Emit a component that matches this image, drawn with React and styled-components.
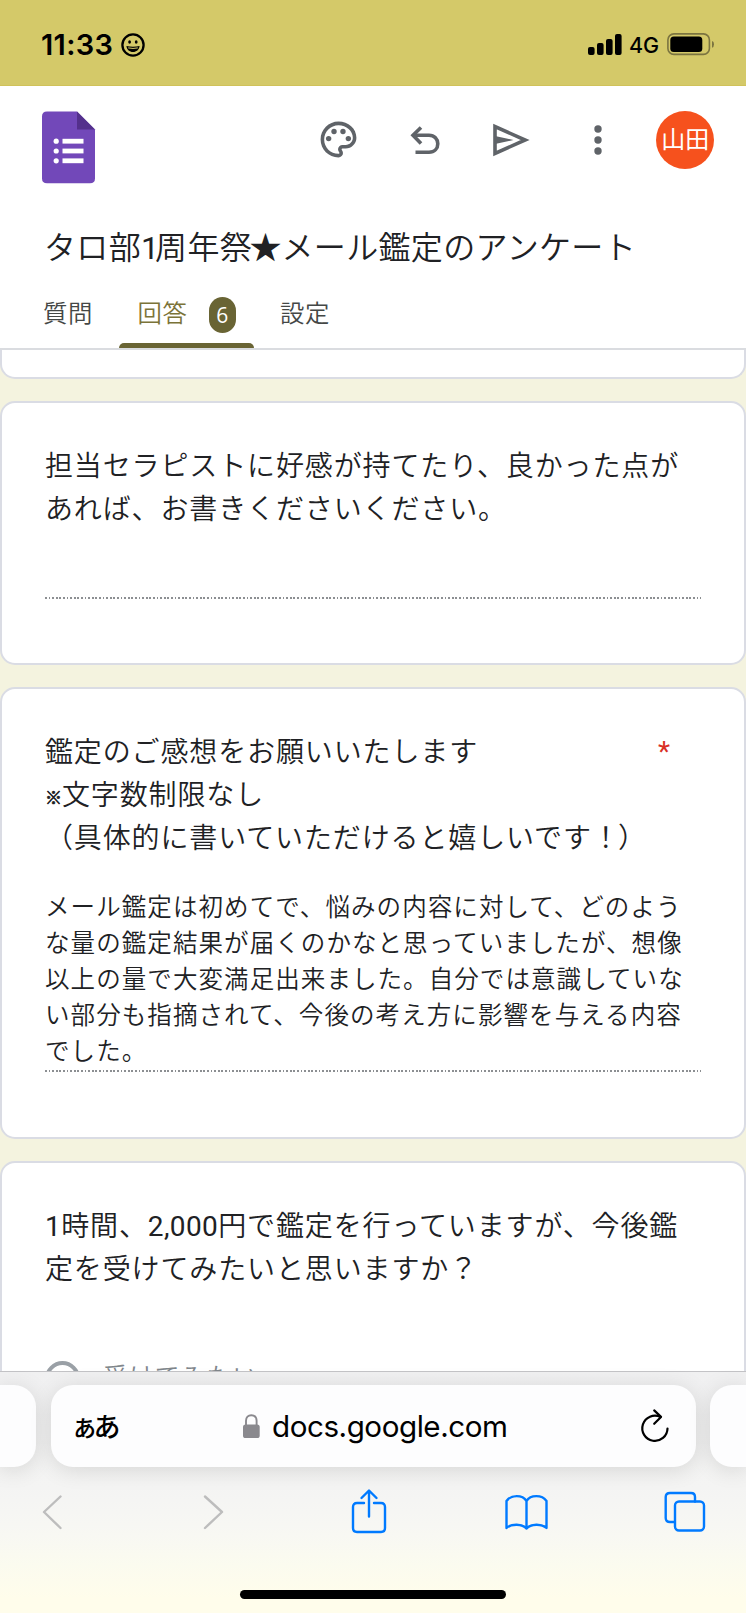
import React from "react";
import styled, { createGlobalStyle } from "styled-components";
import { MdOutlinePalette } from "react-icons/md";

const GlobalStyle = createGlobalStyle`
  * { box-sizing: border-box; }
  body {
    margin: 0;
    background: #f4f3df;
    font-family: Roboto, "Noto Sans CJK JP", sans-serif;
    color: #202124;
  }
  svg { display: block; overflow: visible; }
`;

const Screen = styled.div`
  width: 746px;
  height: 1613px;
  display: flex;
  flex-direction: column;
  overflow: hidden;
`;

const StatusBar = styled.div`
  height: 86px;
  flex: none;
  background: #d4c969;
  border-bottom: 1px solid #d0c25a;
  padding: 4px 31px 0 41px;
  display: flex;
  align-items: center;
  color: #000;
  font-family: Inter, sans-serif;
`;

const Clock = styled.div`
  font-size: 29px;
  font-weight: 600;
  letter-spacing: 0.35px;
  width: 79.5px;
  white-space: nowrap;
`;

const StatusRight = styled.div`
  margin-left: auto;
  display: flex;
  align-items: center;
`;

const Network = styled.span`
  width: 38px;
  font-size: 21.5px;
  font-weight: 500;
  line-height: 26px;
  padding: 1px 0 0 0;
`;

const Header = styled.header`
  height: 264px;
  flex: none;
  background: #fff;
  border-bottom: 2px solid #dadce0;
  display: flex;
  flex-direction: column;
`;

const Toolbar = styled.div`
  height: 97px;
  padding: 24.5px 17.5px 0 42px;
  display: flex;
  justify-content: space-between;
  align-items: flex-start;
`;

const Actions = styled.div`
  display: grid;
  grid-template-columns: repeat(5, 86.5px);
  height: 59px;
  align-items: center;
  justify-items: center;
  color: #5f6368;

  > svg { margin: 0 2px 1px 0; }
`;

const Avatar = styled.div`
  width: 58px;
  height: 58px;
  border-radius: 50%;
  background: #f6511d;
  color: #fff;
  font-size: 24px;
  line-height: 59px;
  text-align: center;
`;

const Title = styled.h1`
  margin: 38.5px 0 0 44px;
  height: 52px;
  line-height: 52px;
  font-size: 32px;
  font-weight: 350;
  letter-spacing: 0.35px;
  white-space: nowrap;
`;

const TitleDigit = styled.span`
  font-weight: 400;
  letter-spacing: -4px;
`;

const Star = styled.span`
  margin: 0 -0.5px 0 -2.5px;
`;

const Tabs = styled.nav`
  margin-top: auto;
  height: 60px;
  padding-left: 18px;
  display: flex;
`;

const Tab = styled.div`
  width: ${(p) => p.$width}px;
  padding: 9px 0 0 ${(p) => p.$inset}px;
  display: flex;
  justify-content: flex-start;
  align-items: flex-start;
  font-size: 24.4px;
  font-weight: 350;
  letter-spacing: 0.7px;
  line-height: 34px;
  color: ${(p) => (p.$active ? "#7b7338" : "#444746")};
  position: relative;

  &::after {
    content: "";
    display: ${(p) => (p.$active ? "block" : "none")};
    position: absolute;
    left: 0;
    right: 0;
    bottom: 0;
    height: 5px;
    border-radius: 5px 5px 0 0;
    background: #696434;
  }
`;

const Badge = styled.span`
  margin-left: 21px;
  width: 27px;
  height: 36px;
  border-radius: 13.5px;
  background: #696434;
  color: #fff;
  font-family: "Open Sans", sans-serif;
  font-size: 21px;
  font-weight: 500;
  letter-spacing: 0;
  line-height: 36px;
  text-align: center;
`;

const Content = styled.main`
  height: 1021px;
  flex: none;
  overflow: hidden;
  display: flex;
  flex-direction: column;
  gap: 22px;
`;

const Card = styled.section`
  height: ${(p) => p.$height}px;
  flex: none;
  background: #fff;
  border: 2px solid #dadce4;
  border-radius: 15px;
  padding: ${(p) => p.$top || 42}px 43px 0;
`;

const CardEnd = styled(Card)`
  border-top: 0;
  border-radius: 0 0 15px 15px;
  padding: 0;
`;

const QuestionRow = styled.div`
  display: flex;
  justify-content: space-between;
  padding-right: 31px;
`;

const Question = styled.div`
  font-size: 28px;
  font-weight: 350;
  letter-spacing: 0.87px;
  line-height: 43.2px;
  white-space: nowrap;
`;

const Digits = styled.span`
  font-weight: 400;
  letter-spacing: 0.4px;
`;

const Tight = styled.span`
  letter-spacing: -2px;
`;

const Note = styled.span`
  font-size: 17px;
  font-weight: 700;
  letter-spacing: 0;
  line-height: 20px;
  vertical-align: 1.5px;
  -webkit-text-stroke: 0.7px currentColor;
`;

const Required = styled.span`
  color: #d93025;
  font-size: 28px;
  line-height: 41px;
`;

const Answer = styled.div`
  height: ${(p) => p.$height}px;
  margin-top: ${(p) => p.$gap}px;
  font-size: 24.5px;
  font-weight: 350;
  letter-spacing: 1.08px;
  line-height: 36px;
  white-space: nowrap;
`;

const DottedRule = styled.div`
  height: 2px;
  background: repeating-linear-gradient(
    to right,
    #8c8f92 0 1.8px,
    #fff 1.8px 3.6px
  );
`;

const Option = styled.div`
  display: flex;
  align-items: center;
  gap: 23px;
  margin-top: 69.5px;
  color: #80868b;
  font-size: 24.8px;
  font-weight: 350;
  letter-spacing: 1.1px;
  line-height: 34px;
`;

const Radio = styled.span`
  width: 35px;
  height: 35px;
  border: 4px solid #9aa0a6;
  border-radius: 50%;
`;

const Browser = styled.footer`
  flex: 1;
  border-top: 1px solid #c3c3c6;
  background: linear-gradient(#f0f0f1 0, #f4f4f3 48%, #f8f8f3 68%, #fbfbef 80%, #fffdeb 94%);
  display: flex;
  flex-direction: column;
`;

const AddressRow = styled.div`
  display: flex;
  gap: 14.5px;
  padding-top: 13px;
`;

const Pill = styled.div`
  height: 82px;
  width: ${(p) => (p.$main ? "645px" : "36px")};
  flex: none;
  border-radius: ${(p) => p.$radius};
  background: #fdfdfe;
  box-shadow: 0 3px 22px rgba(0, 0, 0, 0.12);
  display: flex;
  align-items: center;
  padding: ${(p) => (p.$main ? "0 26.5px 0 20.5px" : "0")};
  color: #000;
`;

const TextSize = styled.span`
  font-size: 27px;
  font-weight: 500;
  letter-spacing: -4.5px;
  line-height: 40px;
  width: 171.5px;
  padding-top: 3px;
`;

const Host = styled.span`
  font-family: Inter, sans-serif;
  font-size: 29.6px;
  letter-spacing: -0.45px;
  line-height: 40px;
  margin-left: 12.5px;
  margin-right: auto;
`;

const NavRow = styled.div`
  display: flex;
  justify-content: space-between;
  padding: 20px 38.5px 0 29.5px;
`;

const HomeBar = styled.div`
  width: 266px;
  height: 9px;
  border-radius: 5px;
  background: #000;
  margin: auto auto 14px 240px;
`;

const Smile = () => (
  <svg width="24" height="24" viewBox="0 0 24 24">
    <circle cx="12" cy="12" r="10.6" fill="none" stroke="#000" strokeWidth="2.3" />
    <ellipse cx="8.6" cy="9" rx="1.4" ry="1.8" />
    <ellipse cx="15.2" cy="9" rx="1.4" ry="1.8" />
    <path d="M5.4 13Q12 14.6 18.6 13C18.2 16.7 15.4 19 12 19S5.8 16.7 5.4 13z" />
    <path d="M7.2 14.9Q12 16 16.8 14.9" fill="none" stroke="#d4c969" strokeWidth="1" />
  </svg>
);

const Signal = () => (
  <svg width="41.5" height="22" viewBox="0 0 41.5 22">
    <rect x="0" y="13" width="6.6" height="8" rx="2" />
    <rect x="9" y="9" width="6.6" height="12" rx="2" />
    <rect x="18" y="5" width="6.6" height="16" rx="2" />
    <rect x="27" y="0" width="6.6" height="21" rx="2" />
  </svg>
);

const Battery = () => (
  <svg width="48" height="23" viewBox="0 0 48 23">
    <rect x="0.9" y="0.9" width="41.5" height="20.5" rx="6" fill="none" stroke="#7b7440" strokeWidth="1.6" />
    <rect x="3.3" y="3.5" width="32" height="15.5" rx="3.5" />
    <path d="M45 8Q47 8.5 47 11.3T45 14.8z" fill="#7b7440" />
  </svg>
);

const FormsLogo = () => (
  <svg width="53" height="73" viewBox="0 0 53 73">
    <path d="M5 0.5H35L53 18.5V67.5Q53 72.3 48 72.3H5Q0 72.3 0 67.5V5.5Q0 0.5 5 0.5z" fill="#7248b9" />
    <path d="M35 0.5L53 18.5H35z" fill="#54308c" />
    <g fill="#fff">
      <circle cx="14.2" cy="30.2" r="2.6" />
      <circle cx="14.2" cy="40" r="2.6" />
      <circle cx="14.2" cy="49.8" r="2.6" />
      <rect x="20.5" y="27.8" width="21" height="4.8" />
      <rect x="20.5" y="37.6" width="21" height="4.8" />
      <rect x="20.5" y="47.4" width="21" height="4.8" />
    </g>
  </svg>
);

const Undo = () => (
  <svg width="30" height="28" viewBox="0 0 30 28" fill="none" stroke="currentColor" strokeWidth="3.6">
    <path d="M11 1.5L3 9.3L11 17.5" />
    <path d="M3 9.3H19C24.4 9.3 27.8 13 27.8 17.8S24.4 26.2 19 26.2H5.5" />
  </svg>
);

const Send = () => (
  <svg width="36" height="32" viewBox="0 0 36 32">
    <path d="M2 2.6V29.4L32.2 16z" fill="none" stroke="currentColor" strokeWidth="3.6" />
    <path d="M2 12L20.5 16L2 20z" fill="currentColor" />
  </svg>
);

const More = () => (
  <svg width="8" height="30" viewBox="0 0 8 30" fill="currentColor">
    <circle cx="4" cy="4" r="3.7" />
    <circle cx="4" cy="15" r="3.7" />
    <circle cx="4" cy="26" r="3.7" />
  </svg>
);

const Lock = () => (
  <svg width="17" height="25" viewBox="0 0 17 25">
    <rect x="0" y="10.5" width="16.7" height="13.5" rx="2.6" fill="#8a898e" />
    <path d="M3 11V6.8C3 3.2 5.2 1.2 8.3 1.2S13.6 3.2 13.6 6.8V11" fill="none" stroke="#8a898e" strokeWidth="1.9" />
  </svg>
);

const Reload = () => (
  <svg width="28" height="34" viewBox="0 0 28 34" fill="none" stroke="#000" strokeWidth="2.2" strokeLinecap="round" strokeLinejoin="round">
    <path d="M26.5 19.5A12.6 12.6 0 1 1 19.5 8" />
    <path d="M13.2 1.4L20 7.9L13.2 14.8" />
  </svg>
);

const NavIcon = ({ color = "#007aff", children }) => (
  <svg width="44" height="50" viewBox="0 0 44 50" fill="none" stroke={color} strokeWidth="2.4" strokeLinecap="round" strokeLinejoin="round">
    {children}
  </svg>
);

export default function App() {
  return (
    <>
      <GlobalStyle />
      <Screen>
        <StatusBar>
          <Clock>11:33</Clock>
          <Smile />
          <StatusRight>
            <Signal />
            <Network>4G</Network>
            <Battery />
          </StatusRight>
        </StatusBar>
        <Header>
          <Toolbar>
            <FormsLogo />
            <Actions>
              <MdOutlinePalette size={43} />
              <Undo />
              <Send />
              <More />
              <Avatar>山田</Avatar>
            </Actions>
          </Toolbar>
          <Title>
            タロ部<TitleDigit>1</TitleDigit>周年祭<Star>★</Star>メール鑑定のアンケート
          </Title>
          <Tabs>
            <Tab $width={101} $inset={25}>質問</Tab>
            <Tab $width={135} $inset={18.5} $active>
              回答<Badge>6</Badge>
            </Tab>
            <Tab $width={101} $inset={26}>設定</Tab>
          </Tabs>
        </Header>
        <Content>
          <CardEnd $height={29} />
          <Card $height={264}>
            <Question>
              担当セラピストに好感が持てたり、良かった点が
              <br />
              あれば、お書きくださいください。
            </Question>
            <Answer $gap={29.6} $height={36} />
            <DottedRule />
          </Card>
          <Card $height={451.5}>
            <QuestionRow>
              <Question>
                鑑定のご感想をお願いいたします
                <br />
                <Note>※</Note>文字数制限なし
                <br />
                （具体的に書いていただけると嬉しいです<Tight>！</Tight>）
              </Question>
              <Required>*</Required>
            </QuestionRow>
            <Answer $gap={29.4} $height={180}>
              メール鑑定は初めてで、悩みの内容に対して、どのよう
              <br />
              な量の鑑定結果が届くのかなと思っていましたが、想像
              <br />
              以上の量で大変満足出来ました。自分では意識していな
              <br />
              い部分も指摘されて、今後の考え方に影響を与える内容
              <br />
              でした。
            </Answer>
            <DottedRule />
          </Card>
          <Card $height={400} $top={42.5}>
            <Question>
              <Digits>1</Digits>時間、<Digits>2,000</Digits>円で鑑定を行っていますが、今後鑑
              <br />
              定を受けてみたいと思いますか？
            </Question>
            <Option>
              <Radio />
              受けてみたい
            </Option>
          </Card>
        </Content>
        <Browser>
          <AddressRow>
            <Pill $radius="0 22px 22px 0" />
            <Pill $main $radius="22px">
              <TextSize>ぁあ</TextSize>
              <Lock />
              <Host>docs.google.com</Host>
              <Reload />
            </Pill>
            <Pill $radius="22px 0 0 22px" />
          </AddressRow>
          <NavRow>
            <NavIcon color="#bdbdbd"><path d="M30.5 9.5L14 25L30.5 41" /></NavIcon>
            <NavIcon color="#bdbdbd"><path d="M17 9.5L34 25L17 41" /></NavIcon>
            <NavIcon>
              <path d="M17 16H10Q6 16 6 20V41Q6 45 10 45H34Q38 45 38 41V20Q38 16 34 16H27" />
              <path d="M22 29.5V4M14.5 11L22 3.5L29.5 11" />
            </NavIcon>
            <NavIcon>
              <path d="M21.5 14C17.5 7.5 6 7.5 1.5 14V41C6 36.5 17.5 36.5 21.5 41.5C25.5 36.5 37 36.5 41.5 41V14C37 7.5 25.5 7.5 21.5 14V41.5" />
            </NavIcon>
            <NavIcon>
              <path d="M10.5 35H6Q1.7 35 1.7 31V10Q1.7 6 6 6H27Q31 6 31 10V14.5" />
              <rect x="11" y="14.5" width="29" height="29" rx="4" />
            </NavIcon>
          </NavRow>
          <HomeBar />
        </Browser>
      </Screen>
    </>
  );
}
